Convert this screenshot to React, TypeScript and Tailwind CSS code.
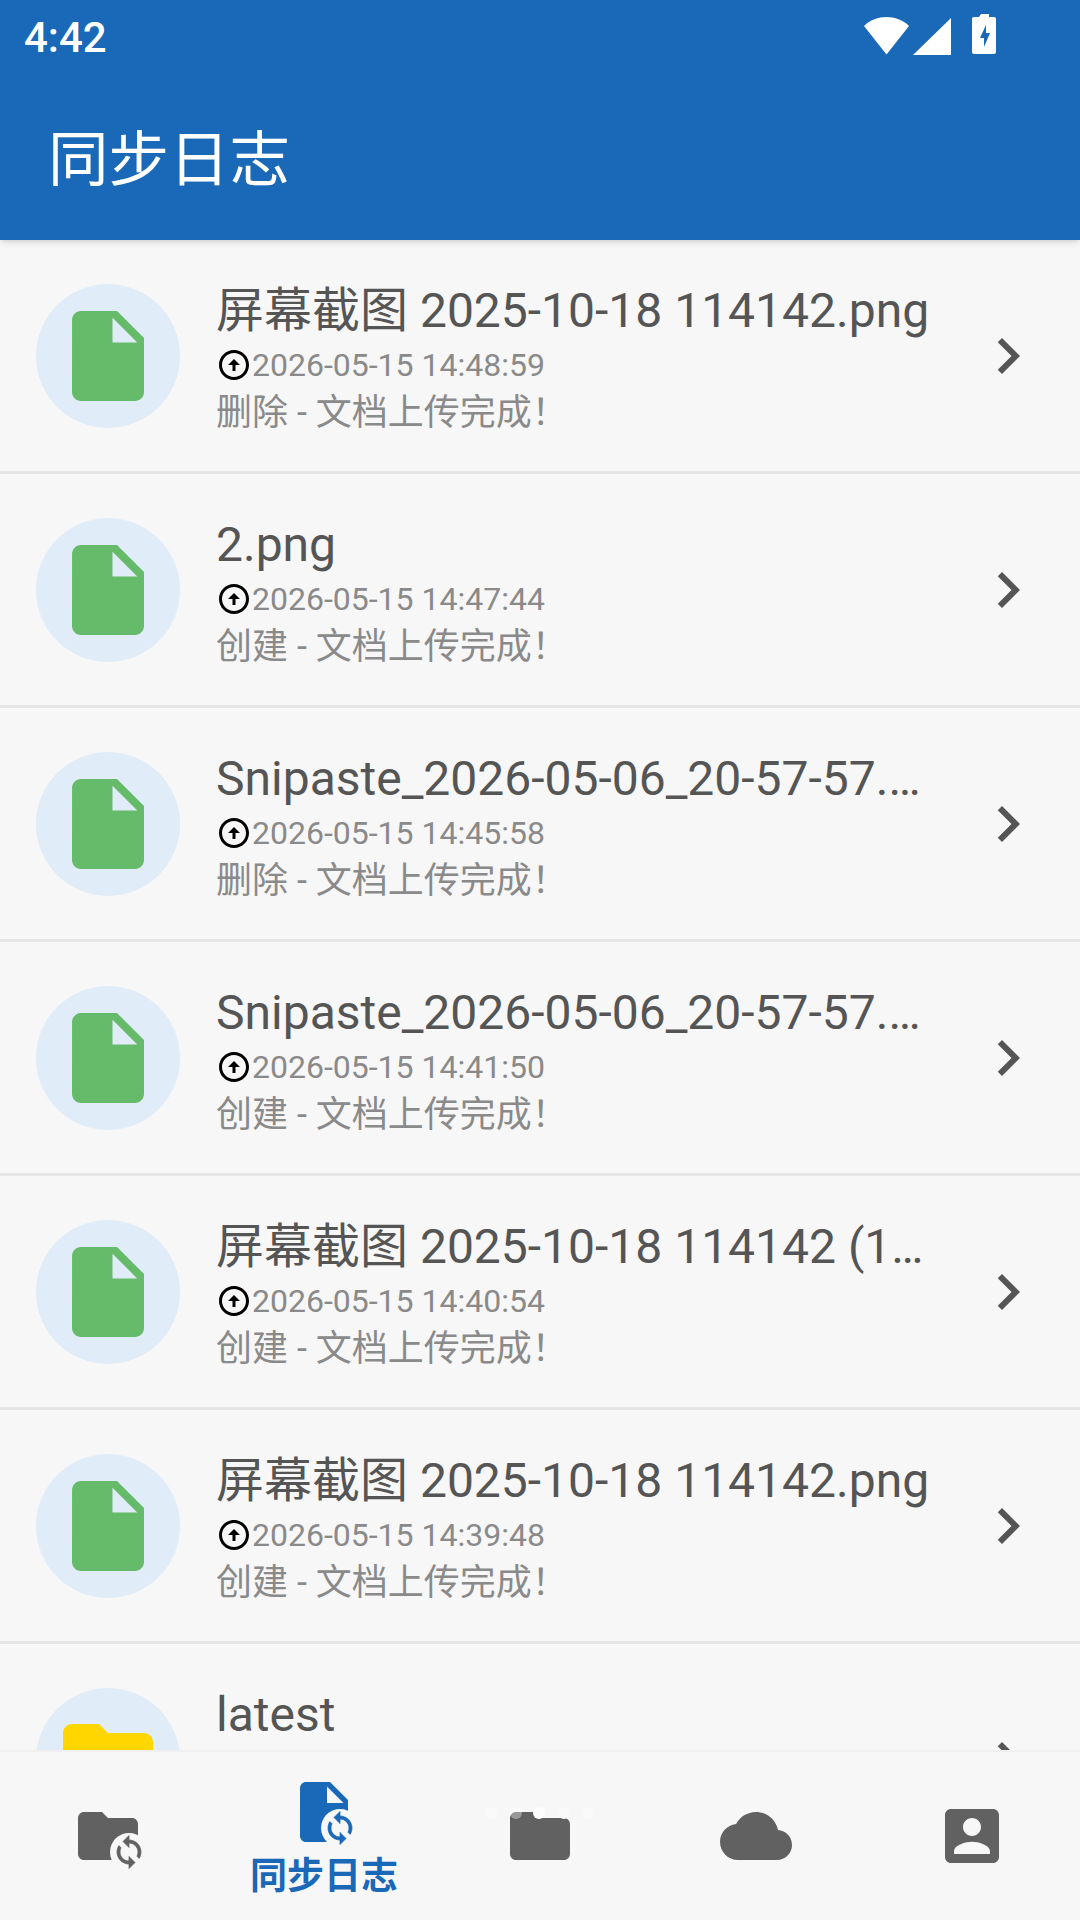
const FILE_PATH = "M14 2H6c-1.1 0-1.99.9-1.99 2L4 20c0 1.1.89 2 1.99 2H18c1.1 0 2-.9 2-2V8l-6-6zm-1 7V3.5L18.5 9H13z";
const FOLDER_PATH = "M10 4H4c-1.1 0-2 .9-2 2v12c0 1.1.9 2 2 2h16c1.1 0 2-.9 2-2V8c0-1.1-.9-2-2-2h-8l-2-2z";
const SYNC_PATH =
  "M12 4V1L8 5l4 4V6c3.31 0 6 2.69 6 6 0 1.01-.25 1.97-.7 2.8l1.46 1.46C19.54 15.03 20 13.57 20 12c0-4.42-3.58-8-8-8zm0 14c-3.31 0-6-2.69-6-6 0-1.01.25-1.97.7-2.8L5.24 7.74C4.46 8.97 4 10.43 4 12c0 4.42 3.58 8 8 8v3l4-4-4-4v3z";

const logs: { name: string; time?: string; status?: string; folder?: boolean }[] = [
  { name: "屏幕截图 2025-10-18 114142.png", time: "2026-05-15 14:48:59", status: "删除 - 文档上传完成！" },
  { name: "2.png", time: "2026-05-15 14:47:44", status: "创建 - 文档上传完成！" },
  { name: "Snipaste_2026-05-06_20-57-57.…", time: "2026-05-15 14:45:58", status: "删除 - 文档上传完成！" },
  { name: "Snipaste_2026-05-06_20-57-57.…", time: "2026-05-15 14:41:50", status: "创建 - 文档上传完成！" },
  { name: "屏幕截图 2025-10-18 114142 (1…", time: "2026-05-15 14:40:54", status: "创建 - 文档上传完成！" },
  { name: "屏幕截图 2025-10-18 114142.png", time: "2026-05-15 14:39:48", status: "创建 - 文档上传完成！" },
  { name: "latest", folder: true },
];

function StatusIcons() {
  return (
    <svg viewBox="0 0 140 44" className="w-[140px] h-[44px] fill-white">
      <path d="M0 13 C12 0 33 0 45 13 L22.5 44 Z" transform="scale(1 .92)" />
      <path d="M87 4 V41 H49 Z" />
      <path d="M117 0h8v3h5a2 2 0 0 1 2 2v33a2 2 0 0 1-2 2h-20a2 2 0 0 1-2-2V5a2 2 0 0 1 2-2h5z" />
      <path d="M122 11l-6 13h4v9l6-14h-4z" fill="#1a68b8" />
    </svg>
  );
}

function RowIcon({ folder }: { folder?: boolean }) {
  return (
    <div className="w-[144px] h-[144px] rounded-full bg-[#e0ecf8] flex items-center justify-center shrink-0">
      <svg viewBox="0 0 24 24" className={`w-[108px] h-[108px] ${folder ? "fill-[#ffd600]" : "fill-[#66bb6a]"}`}>
        <path d={folder ? FOLDER_PATH : FILE_PATH} />
      </svg>
    </div>
  );
}

function LogRow({ name, time, status, folder }: { name: string; time?: string; status?: string; folder?: boolean }) {
  return (
    <div className="h-[234px] shrink-0 border-b-[3px] border-[#e5e5e5] px-[36px] flex items-center">
      <RowIcon folder={folder} />
      <div className="ml-[36px] flex-1 min-w-0 h-[163px] pt-[10px]">
        <div className="text-[48px] leading-[54px] text-[#555555] whitespace-nowrap">{name}</div>
        {time && (
          <div className="flex items-center h-[48px] mt-[3px]">
            <svg viewBox="0 0 24 24" className="w-[36px] h-[36px] fill-black shrink-0">
              <path d="M12 4c4.41 0 8 3.59 8 8s-3.59 8-8 8-8-3.59-8-8 3.59-8 8-8m0-2C6.48 2 2 6.48 2 12s4.480 10 10 10 10-4.48 10-10S17.520 2 12 2zm1 10h3l-4-4-4 4h3v4h2v-4z" />
            </svg>
            <span className="text-[32px] text-[#8a8a8a]">{time}</span>
          </div>
        )}
        {status && <div className="text-[36px] leading-[48px] text-[#8a8a8a]">{status}</div>}
      </div>
      <svg viewBox="0 0 24 24" className="w-[72px] h-[72px] fill-[#555555] shrink-0">
        <path d="M10 6 8.59 7.41 13.17 12l-4.58 4.59L10 18l6-6z" />
      </svg>
    </div>
  );
}

function SyncBadge({ x, y, color }: { x: number; y: number; color: string }) {
  return (
    <g transform={`translate(${x} ${y})`}>
      <circle r="19" fill="#f7f7f7" />
      <path d={SYNC_PATH} fill={color} stroke={color} strokeWidth="0.5" transform="translate(-18 -18) scale(1.5)" />
    </g>
  );
}

function BottomNav() {
  return (
    <nav className="h-[170px] shrink-0 border-t-[2px] border-[#f0f0f0] bg-[#f7f7f7] grid grid-cols-5">
      <div className="flex justify-center pt-[48px]">
        <svg viewBox="0 0 72 72" className="w-[72px] h-[72px] overflow-visible">
          <path d={FOLDER_PATH} fill="#616161" transform="scale(3)" />
          <SyncBadge x={57} y={52} color="#616161" />
        </svg>
      </div>
      <div className="flex flex-col items-center pt-[24px]">
        <svg viewBox="0 0 72 72" className="w-[72px] h-[72px] overflow-visible">
          <path d={FILE_PATH} fill="#1a68b8" transform="scale(3)" />
          <SyncBadge x={52} y={52} color="#1a68b8" />
        </svg>
        <span className="mt-[5px] text-[37px] leading-[48px] font-bold text-[#1a68b8]">同步日志</span>
      </div>
      <div className="flex justify-center pt-[48px]">
        <svg viewBox="0 0 72 72" className="w-[72px] h-[72px] overflow-visible">
          <path d={FOLDER_PATH} fill="#616161" transform="scale(3)" />
          <circle cx="12" cy="13" r="6" fill="#ffffff" opacity="0.35" />
          <circle cx="35" cy="13" r="6" fill="#fdfdfd" />
          <circle cx="-13" cy="13" r="6" fill="#fafafa" />
          <circle cx="60" cy="13" r="6" fill="#fafafa" />
          <circle cx="84" cy="13" r="6" fill="#fafafa" />
        </svg>
      </div>
      <div className="flex justify-center pt-[48px]">
        <svg viewBox="0 0 24 24" className="w-[72px] h-[72px] fill-[#616161]">
          <path d="M19.35 10.04C18.67 6.59 15.64 4 12 4 9.11 4 6.6 5.64 5.35 8.04 2.34 8.36 0 10.91 0 14c0 3.31 2.69 6 6 6h13c2.76 0 5-2.24 5-5 0-2.64-2.05-4.78-4.65-4.96z" />
        </svg>
      </div>
      <div className="flex justify-center pt-[48px]">
        <svg viewBox="0 0 24 24" className="w-[72px] h-[72px] fill-[#616161]">
          <path d="M3 5v14c0 1.100.89 2 2 2h14c1.100 0 2-.9 2-2V5c0-1.100-.9-2-2-2H5c-1.110 0-2 .9-2 2zm12 4c0 1.660-1.340 3-3 3s-3-1.340-3-3 1.340-3 3-3 3 1.340 3 3zm-9 8c0-2 4-3.100 6-3.100s6 1.100 6 3.100v1H6v-1z" />
        </svg>
      </div>
    </nav>
  );
}

export default function App() {
  return (
    <div className="w-[1080px] h-[1920px] flex flex-col overflow-hidden bg-[#f7f7f7] font-['Roboto','Noto_Sans_CJK_SC',sans-serif]">
      <header className="h-[240px] shrink-0 bg-[#1a68b8] text-white shadow-md relative z-10">
        <div className="h-[72px] pl-[24px] pr-[76px] flex items-center justify-between">
          <span className="text-[42px] font-medium leading-none pt-[4px]">4:42</span>
          <StatusIcons />
        </div>
        <h1 className="pl-[48px] mt-[47px] text-[60.5px] leading-[84px] font-normal">同步日志</h1>
      </header>
      <main className="flex-1 min-h-0 overflow-hidden">
        {logs.map((log, i) => (
          <LogRow key={i} {...log} />
        ))}
      </main>
      <BottomNav />
    </div>
  );
}
